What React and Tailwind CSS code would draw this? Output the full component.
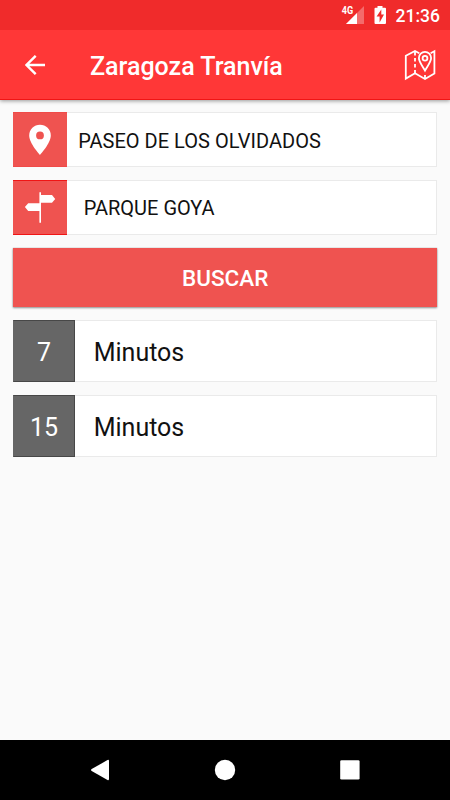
import React from "react";

const stop = { icon: "pin", name: "PASEO DE LOS OLVIDADOS" };
const direction = { icon: "sign", name: "PARQUE GOYA" };
const arrivals = [7, 15];

const StatusBar = () => (
  <div className="z-10 flex h-[30px] items-center justify-end bg-[#f02b2b] pr-[10px] text-white">
    <svg width="26" height="30" viewBox="340 0 26 30" className="mr-[7.5px]">
      <path d="M364 6V24H346Z" fill="#fff" fillOpacity="0.3" />
      <path d="M357 13V24H346Z" fill="#fff" />
      <rect x="340" y="4" width="13.5" height="11" fill="#f02b2b" />
      <text
        x="341.8"
        y="14"
        fill="#fff"
        fontSize="10.5"
        fontWeight="700"
        fontFamily="Roboto, sans-serif"
        textLength="11.4"
        lengthAdjust="spacingAndGlyphs"
      >
        4G
      </text>
    </svg>
    <svg width="14" height="30" viewBox="373 0 14 30" className="mr-[8.5px]">
      <path
        d="M377.5 6H382.5V7.8H385Q386 7.8 386 8.8V23Q386 24 385 24H375.5Q374.5 24 374.5 23V8.8Q374.5 7.8 375.5 7.8H377.5Z"
        fill="#fff"
      />
      <path d="M381.3 9.4L376.6 16.6H379.6V22.4L384 14.6H381.3Z" fill="#f02b2b" />
    </svg>
    <span className="pt-[3px] text-[17.5px] leading-none font-medium">21:36</span>
  </div>
);

const Toolbar = () => (
  <div className="flex h-[70px] items-center border-b border-[#f01515] bg-[#ff3737] pt-px text-white shadow-[0_1px_4px_rgba(0,0,0,0.4)]">
    <svg width="20" height="20" viewBox="0 0 20 20" className="ml-[25px]">
      <path
        d="M20 10H1.6M10.7 0.8L1.5 10L10.7 19.2"
        fill="none"
        stroke="#fff"
        strokeWidth="2.4"
      />
    </svg>
    <h1 className="ml-[45px] pt-[2px] text-[25px] leading-none font-medium">
      Zaragoza Tranvía
    </h1>
    <svg
      width="34"
      height="34"
      viewBox="403 48 34 34"
      className="ml-auto mr-[13px]"
      fill="none"
      stroke="#fff"
      strokeWidth="1.8"
    >
      <path d="M419.3 53.2L415 51L405.8 55.8V78.6L415 73.2L425 79L434.4 73.4V51.2L430.6 53.3" />
      <path d="M415 52V73" strokeDasharray="3.6 2.4" />
      <path d="M425 75V79" />
      <path d="M425 70.6C423 66.6 418.9 62 418.9 58A6.1 6.1 0 0 1 431.1 58C431.1 62 427 66.6 425 70.6Z" />
      <circle cx="425" cy="58.2" r="2.4" />
    </svg>
  </div>
);

const PinIcon = () => (
  <svg width="54" height="53" viewBox="13 113 54 53">
    <path
      fillRule="evenodd"
      fill="#fff"
      d="M40 124.7A10.8 10.8 0 0 0 29.2 135.5C29.2 143.4 40 154.9 40 154.9S50.8 143.4 50.8 135.5A10.8 10.8 0 0 0 40 124.7ZM40 139.3A3.9 3.9 0 1 1 40 131.5A3.9 3.9 0 0 1 40 139.3Z"
    />
  </svg>
);

const SignIcon = () => (
  <svg width="54" height="53" viewBox="13 181 54 53">
    <path
      fill="#fff"
      d="M39.4 192.2H41V195H52L55.2 198.9L52 202.8H41V222.8H39.4V211H28.2L24.9 207.1L28.2 203.2H39.4Z"
    />
  </svg>
);

const SelectRow = ({ item }) => (
  <div className="flex h-[55px] border border-[#eaeaea] border-l-0 bg-white">
    <div
      className={
        item.icon === "pin"
          ? "-my-px flex w-[54px] items-center justify-center border-y border-[#f04a48] bg-[#ef5350]"
          : "-my-px flex w-[54px] items-center justify-center border-y border-[#f01515] bg-[#ef5350]"
      }
    >
      {item.icon === "pin" ? <PinIcon /> : <SignIcon />}
    </div>
    <span
      className={
        item.icon === "pin"
          ? "flex items-center pl-[11.2px] pt-[2px] text-[20px] leading-none tracking-[0.02px]"
          : "flex items-center pl-[16.7px] pt-px text-[20px] leading-none"
      }
    >
      {item.name}
    </span>
  </div>
);

const ArrivalRow = ({ minutes }) => (
  <div className="flex h-[62.4px] border border-[#eaeaea] border-l-0 bg-white">
    <div className="-my-px flex w-[62px] items-center justify-center border border-[#474747] border-l-[#666666] bg-[#666666] pt-[2px] text-[25px] leading-none text-white">
      {minutes}
    </div>
    <span className="flex items-center pl-[18.7px] pt-[2px] text-[25px] leading-none">
      Minutos
    </span>
  </div>
);

const NavBar = () => (
  <div className="h-[60px] bg-black">
    <svg width="450" height="60" viewBox="0 740 450 60" fill="#fff">
      <path d="M107.5 760.1Q109 759.3 109 761V779Q109 780.7 107.5 779.9L91.7 771Q90.3 770 91.7 769Z" />
      <circle cx="225" cy="770" r="10.2" />
      <rect x="340.2" y="760.2" width="19.4" height="19.4" rx="1.3" />
    </svg>
  </div>
);

const App = () => {
  return (
    <div className="flex h-[800px] w-[450px] flex-col overflow-hidden bg-[#fafafa] font-['Roboto',sans-serif] text-[#111111]">
      <StatusBar />
      <Toolbar />
      <main className="flex flex-1 flex-col pt-[12.4px] pr-[12.6px] pl-[13px]">
        <SelectRow item={stop} />
        <div className="mt-[12.6px]">
          <SelectRow item={direction} />
        </div>
        <button className="mt-[13px] h-[59px] bg-[#ef5350] pt-[2px] text-[22.5px] leading-none font-medium text-white shadow-[0_1px_2px_rgba(0,0,0,0.4),0_0_1px_rgba(0,0,0,0.3)]">
          BUSCAR
        </button>
        <div className="mt-[13px] flex flex-col gap-[12.6px]">
          {arrivals.map((minutes) => (
            <ArrivalRow key={minutes} minutes={minutes} />
          ))}
        </div>
      </main>
      <NavBar />
    </div>
  );
};

export default App;
